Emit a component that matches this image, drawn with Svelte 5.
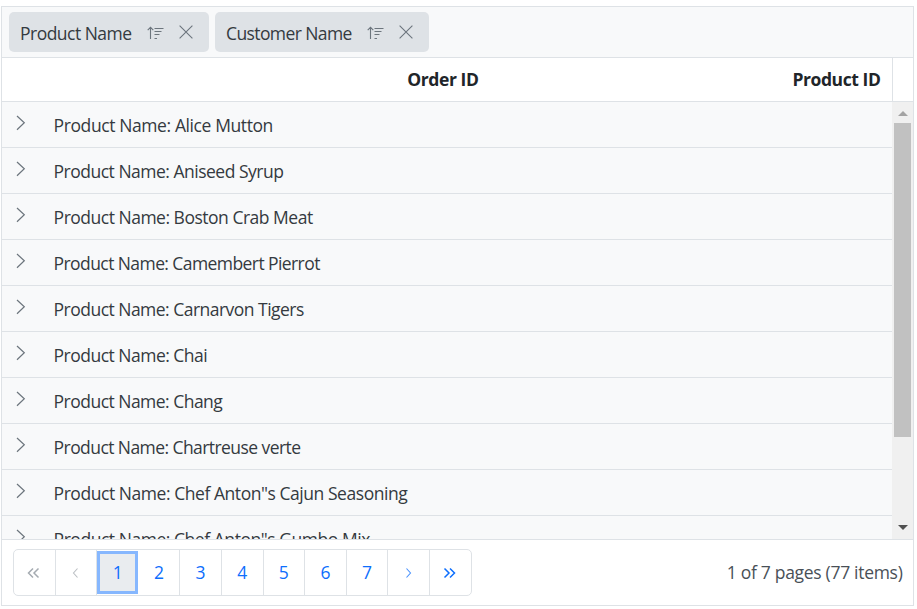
<script>
  const groups = [
    { name: 'Product Name', width: 200, track: -0.52 },
    { name: 'Customer Name', width: 214, track: -0.6 }
  ];
  const rows = [
    { name: 'Alice Mutton', track: -0.4 },
    { name: 'Aniseed Syrup', track: -0.5 },
    { name: 'Boston Crab Meat', track: -0.49 },
    { name: 'Camembert Pierrot', track: -0.58 },
    { name: 'Carnarvon Tigers', track: -0.52 },
    { name: 'Chai', track: -0.51 },
    { name: 'Chang', track: -0.52 },
    { name: 'Chartreuse verte', track: -0.57 },
    { name: 'Chef Anton"s Cajun Seasoning', track: -0.45 },
    { name: 'Chef Anton"s Gumbo Mix', track: -0.46 }
  ];
  const pages = [1, 2, 3, 4, 5, 6, 7];
</script>

<div class="grid">
  <div class="drop">
    {#each groups as g}
      <div class="chip" style:width="{g.width}px">
        <span style:letter-spacing="{g.track}px">{g.name}</span>
        <svg class="sort" width="17" height="14" viewBox="0 0 17 14">
          <path d="M3.5 13V1.5M.7 4.2L3.5 1.3l2.800 2.900M7.500 2.500h9M7.500 5.500h7M7.500 8.500h5M7.500 12.500h2.500" />
        </svg>
        <svg class="close" width="14" height="14" viewBox="0 0 14 14"><path d="M.6.6l12.8 12.8M13.4.6L.6 13.4" /></svg>
      </div>
    {/each}
  </div>
  <div class="header">
    <div class="th first">Order ID</div>
    <div class="th second">Product ID</div>
    <div class="gap"></div>
  </div>
  <div class="content">
    <div class="rows">
      {#each rows as r}
        <div class="row">
          <svg width="10" height="16" viewBox="0 0 10 16"><path d="M1 1l7.3 6.8L1 14.7" /></svg>
          <span style:letter-spacing="{r.track}px">Product Name: {r.name}</span>
        </div>
      {/each}
    </div>
    <div class="scroll">
      <svg width="10" height="5" viewBox="0 0 10 5"><path d="M0 5L5 0l5 5z" fill="#a3a3a3" /></svg>
      <div class="thumb"></div>
      <svg class="down" width="10" height="5" viewBox="0 0 10 5"><path d="M0 0h10L5 5z" fill="#505050" /></svg>
    </div>
  </div>
  <div class="pager">
    <div class="pages">
      <div class="page nav off"><svg width="13" height="12" viewBox="0 0 13 12"><path d="M6 1.500L1.500 6 6 10.500M11.500 1.500L7 6l4.500 4.500" /></svg></div>
      <div class="page nav off thin"><svg width="7" height="12" viewBox="0 0 7 12"><path d="M5.500 1.500L1.500 6l4 4.500" /></svg></div>
      {#each pages as p}
        <div class="page" class:active={p === 1}><span>{p}</span></div>
      {/each}
      <div class="page nav thin"><svg width="7" height="12" viewBox="0 0 7 12"><path d="M1.500 1.500L5.500 6l-4 4.500" /></svg></div>
      <div class="page nav"><svg width="13" height="12" viewBox="0 0 13 12"><path d="M1.500 1.500L6 6l-4.500 4.500M7 1.500L11.500 6 7 10.500" /></svg></div>
    </div>
    <div class="info">1 of 7 pages (77 items)</div>
  </div>
</div>

<style>
  :global(body) { background: #fff; }
  .grid, .grid * { box-sizing: border-box; }
  .grid {
    width: 913px; height: 600px; margin: 6px 0 0 1px; border: 1px solid #dee2e6;
    display: flex; flex-direction: column;
    font: 17.5px/24px "Open Sans", "Noto Sans", sans-serif; color: #343a40; white-space: nowrap;
  }
  svg { display: block; fill: none; flex: none; }
  .drop {
    height: 51px; flex: none; background: #f8f9fa; border-bottom: 1px solid #dee2e6;
    padding: 5px 7px; display: flex; gap: 6px;
  }
  .chip {
    height: 40px; background: #dee2e6; border-radius: 5px; display: flex; align-items: center;
    padding: 0 16px 0 11px;
  }
  .chip span { flex: 1; padding-top: 1px; }
  .chip svg { stroke: #6c757d; stroke-width: 1.1; }
  .sort { margin-right: 15.5px; margin-top: 2px; }
  .header {
    height: 44px; flex: none; display: flex; border-bottom: 1px solid #dee2e6;
    font-weight: 700; color: #212529; line-height: 43px; letter-spacing: -0.42px;
  }
  .th { text-align: right; }
  .first { width: 476.5px; }
  .second { flex: 1; padding-right: 11.5px; }
  .gap { width: 21px; border-left: 1px solid #dee2e6; }
  .content { height: 437px; flex: none; display: flex; overflow: hidden; }
  .rows { flex: 1; background: #f8f9fa; }
  .row {
    height: 46px; border-bottom: 1px solid #dee2e6; display: flex; align-items: center;
    padding-left: 14px;
  }
  .row svg { stroke: #6c757d; stroke-width: 1.2; margin: 0 27.6px 3px 0; }
  .scroll {
    width: 21px; background: #f0f0f0; display: flex; flex-direction: column; align-items: center;
    padding: 9px 0 9px;
  }
  .thumb { width: 17px; height: 314px; margin-top: 7px; background: #c1c1c1; }
  .down { margin-top: auto; }
  .pager {
    flex: 1; border-top: 1px solid #dee2e6; display: flex; align-items: center;
    justify-content: space-between; padding: 0 10.5px 0 11px;
  }
  .pages { display: flex; width: 459px; height: 47px; border: 1px solid #dee2e6; border-radius: 5px; }
  .page {
    flex: 0 0 41.6px; display: flex; align-items: center; justify-content: center; color: #0d6efd;
    border-right: 1px solid #dee2e6;
  }
  .page:last-child { border-right: 0; flex: 1; }
  .page span { padding-bottom: 2px; }
  .page svg { stroke: #0d6efd; stroke-width: 1.5; margin: 1px 1px 0 0; }
  .page.off svg { stroke: #a5abb1; }
  .page.thin svg { stroke-width: 1.1; opacity: .75; }
  .page.active { flex-basis: 41px; background: #e9ecef; border: 3px solid #86b7fe; margin: 1px .55px 1px 0; }
  .info { color: #495057; letter-spacing: -0.3px; padding-bottom: 2px; }
</style>
